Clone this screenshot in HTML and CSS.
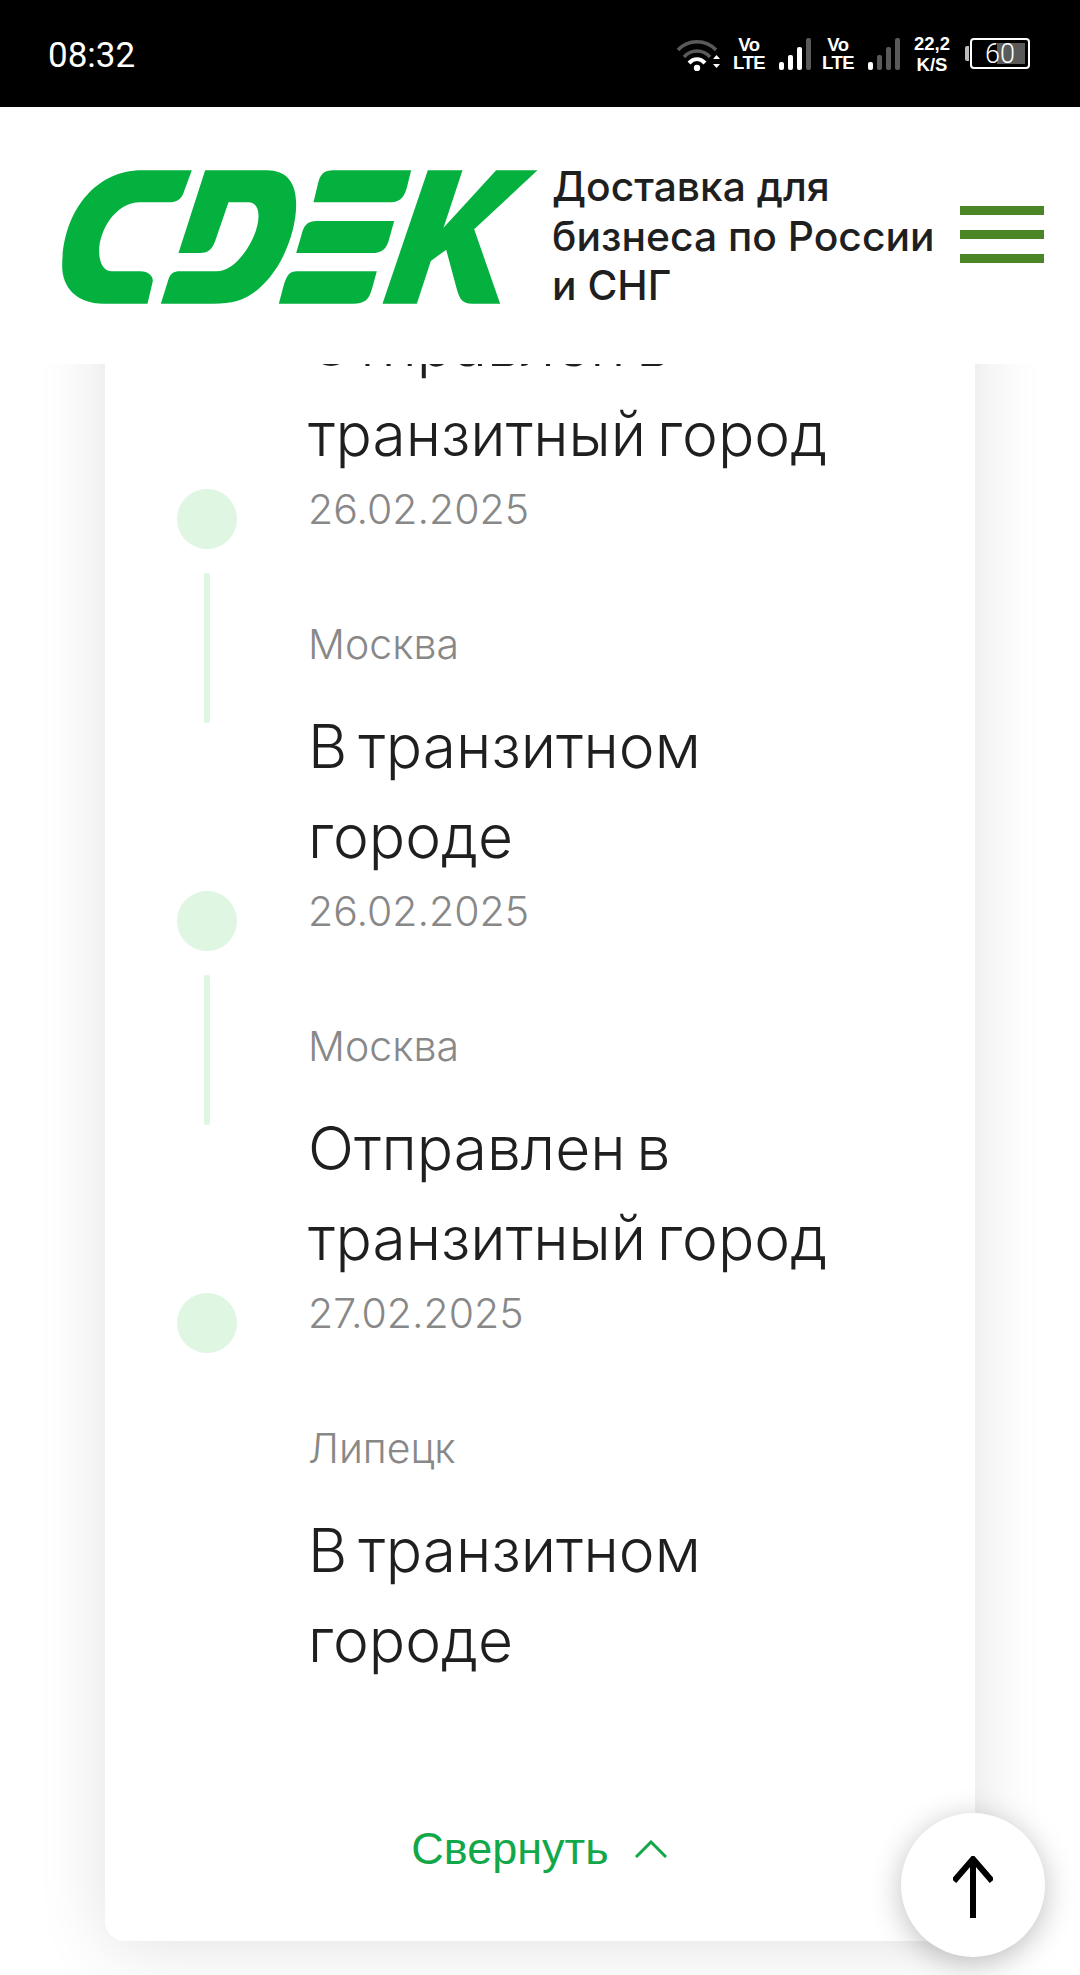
FILE: index.html
```html
<!DOCTYPE html>
<html lang="ru">
<head>
    <meta charset="UTF-8">
    <meta name="viewport" content="width=device-width, initial-scale=1.0">
    <title>СДЭК</title>
    <link rel="stylesheet" href="styles.css">
</head>
<body>
    <div class="status-bar">
        <span class="clock">08:32</span>
        <div class="status-icons">
            <svg class="wifi" viewBox="0 0 44 34" width="44" height="34">
                <path d="M2 13 C12 2 30 2 40 13" fill="none" stroke="#5a5a5a" stroke-width="3.5"/>
                <path d="M8 20 C15 12 27 12 34 20" fill="none" stroke="#5a5a5a" stroke-width="3.5"/>
                <path d="M13 26 C18 21 24 21 29 26" fill="none" stroke="#fff" stroke-width="4"/>
                <circle cx="21" cy="31" r="3.2" fill="#fff"/>
                <path d="M37 22 L40.500 18 L44 22 Z M37 27 L44 27 L40.500 31 Z" fill="#fff"/>
            </svg>
            <span class="volte">Vo<br>LTE</span>
            <svg class="signal" viewBox="0 0 32 32" width="32" height="32">
                <rect x="0" y="24" width="5" height="8" rx="2" fill="#fff"/>
                <rect x="9" y="17" width="5" height="15" rx="2" fill="#fff"/>
                <rect x="18" y="9" width="5" height="23" rx="2" fill="#fff"/>
                <rect x="27" y="0" width="5" height="32" rx="2" fill="#5a5a5a"/>
            </svg>
            <span class="volte">Vo<br>LTE</span>
            <svg class="signal" viewBox="0 0 32 32" width="32" height="32">
                <rect x="0" y="24" width="5" height="8" rx="2" fill="#fff"/>
                <rect x="9" y="17" width="5" height="15" rx="2" fill="#5a5a5a"/>
                <rect x="18" y="9" width="5" height="23" rx="2" fill="#5a5a5a"/>
                <rect x="27" y="0" width="5" height="32" rx="2" fill="#5a5a5a"/>
            </svg>
            <span class="speed">22,2<br>K/S</span>
            <div class="battery">
                <span class="battery-nub"></span>
                <div class="battery-body">
                    <span class="battery-level">60</span>
                </div>
            </div>
        </div>
    </div>

    <header class="site-header">
        <svg class="logo" viewBox="60 84 1436 408" width="479" height="136">
            <g fill="#04b13f">
                <path d="M455 88 L305 88 C160 88 66 220 66 375 C66 440 110 488 190 488 L322 488 L338 420 C338 405 325 391 300 391 L215 391 C190 391 177 365 177 330 C177 270 225 184 300 184 L385 184 C410 184 425 175 432 150 Z"/>
                <path d="M495 88 L680 88 C735 88 768 120 768 190 C768 270 730 370 670 430 C625 475 585 488 520 488 L362 488 L385 415 C391 398 400 391 420 391 L530 391 C590 391 655 290 655 225 C655 200 645 184 625 184 L565 184 L525 300 C515 328 500 336 480 336 L415 336 Z"/>
                <path d="M880 88 L1113 88 L1100 140 C1090 175 1075 184 1045 184 L820 184 L833 130 C840 100 850 88 880 88 Z"/>
                <path d="M830 240 L1062 240 L1048 290 C1040 325 1025 336 995 336 L768 336 L783 285 C790 255 800 240 830 240 Z"/>
                <path d="M770 391 L1010 391 L995 445 C985 480 970 488 940 488 L716 488 L730 435 C740 400 750 391 770 391 Z"/>
                <path d="M1163 88 L1267 88 L1210 260 L1368 88 L1492 88 L1302 265 L1380 488 L1295 488 C1270 488 1260 480 1250 445 L1218 326 L1172 360 L1130 488 L1027 488 Z"/>
            </g>
        </svg>
        <div class="tagline">Доставка для<br>бизнеса по России<br>и СНГ</div>
        <div class="burger">
            <span></span>
            <span></span>
            <span></span>
        </div>
    </header>

    <main class="content">
        <section class="track-card">
            <div class="step">
                <div class="marker"><span class="dot"></span><span class="line"></span></div>
                <div class="step-text">
                    <div class="step-date">26.02.2025</div>
                    <div class="step-city">Москва</div>
                    <div class="step-title">Отправлен в<br>транзитный город</div>
                </div>
            </div>
            <div class="step">
                <div class="marker"><span class="dot"></span><span class="line"></span></div>
                <div class="step-text">
                    <div class="step-date">26.02.2025</div>
                    <div class="step-city">Москва</div>
                    <div class="step-title">В транзитном<br>городе</div>
                </div>
            </div>
            <div class="step">
                <div class="marker"><span class="dot"></span><span class="line"></span></div>
                <div class="step-text">
                    <div class="step-date">26.02.2025</div>
                    <div class="step-city">Москва</div>
                    <div class="step-title">Отправлен в<br>транзитный город</div>
                </div>
            </div>
            <div class="step">
                <div class="marker"><span class="dot"></span></div>
                <div class="step-text">
                    <div class="step-date">27.02.2025</div>
                    <div class="step-city">Липецк</div>
                    <div class="step-title">В транзитном<br>городе</div>
                </div>
            </div>
            <div class="collapse">
                <span>Свернуть</span>
                <svg viewBox="0 0 32 18" width="32" height="18">
                    <path d="M1 17 L16 2 L31 17" fill="none" stroke="#12a84a" stroke-width="3"/>
                </svg>
            </div>
        </section>
    </main>

    <button class="to-top">
        <svg viewBox="0 0 40 62" width="40" height="62">
            <path d="M20 62 L20 3 M1 25 L20 3 L39 25" fill="none" stroke="#000" stroke-width="6"/>
        </svg>
    </button>
</body>
</html>
```

FILE: styles.css
```css
html, body {
    height: 100%;
}

body {
    margin: 0;
    height: 1975px;
    display: flex;
    flex-direction: column;
    overflow: hidden;
    position: relative;
    background-color: #ffffff;
    font-family: Inter, "Noto Sans", sans-serif;
    color: #1f1f1f;
}

/* status bar */
.status-bar {
    height: 107px;
    flex: none;
    display: flex;
    align-items: center;
    justify-content: space-between;
    padding: 0 50px 0 48px;
    background-color: #000000;
    color: #ffffff;
}

.clock {
    font-family: Roboto, sans-serif;
    font-size: 35px;
    margin-top: 3px;
}

.status-icons {
    display: flex;
    align-items: center;
}

.wifi {
    margin-right: 13px;
}

.volte {
    font-family: "Liberation Sans", sans-serif;
    font-size: 18.500px;
    font-weight: bold;
    line-height: 18px;
    letter-spacing: -0.500px;
    text-align: center;
    width: 32px;
}

.signal {
    margin: 0 11px 0 14px;
}

.speed {
    font-family: "Liberation Sans", sans-serif;
    font-size: 18.500px;
    font-weight: bold;
    line-height: 21px;
    text-align: center;
    width: 40px;
    margin-left: 1px;
}

.battery {
    display: flex;
    align-items: center;
    margin-left: 13px;
}

.battery-nub {
    width: 4px;
    height: 15px;
    border-radius: 2px 0 0 2px;
    background-color: #bbbbbb;
    margin-right: 1px;
}

.battery-body {
    width: 50px;
    height: 21px;
    padding: 3px;
    border: 2px solid #ffffff;
    border-radius: 4px;
    display: flex;
    align-items: center;
    justify-content: center;
    background: linear-gradient(to right, transparent 44%, #5a5a5a 44%) content-box;
}

.battery-level {
    font-family: Roboto, sans-serif;
    font-size: 27px;
    font-weight: 300;
}

/* header */
.site-header {
    height: 257px;
    flex: none;
    display: flex;
    align-items: flex-start;
    padding: 62px 36px 0 60px;
    box-sizing: border-box;
    background-color: #ffffff;
}

.tagline {
    margin: -7px 0 0 13px;
    font-size: 40.800px;
    font-weight: 550;
    line-height: 49.500px;
    white-space: nowrap;
}

.burger {
    margin: 37px 0 0 auto;
    display: flex;
    flex-direction: column;
    gap: 15px;
}

.burger span {
    display: block;
    width: 84px;
    height: 9px;
    background-color: #4a8526;
}

/* tracking */
.content {
    flex: 1;
    min-height: 0;
    display: flex;
    flex-direction: column;
    justify-content: flex-end;
    overflow: hidden;
    padding: 0 105px 34px;
}

.track-card {
    flex: none;
    padding: 0 0 0 72px;
    background-color: #ffffff;
    border-radius: 0 0 20px 20px;
    box-shadow: 0 4px 70px rgba(0, 0, 0, 0.12);
}

.step {
    display: grid;
    grid-template-columns: 131px 1fr;
}

.step-text {
    margin-top: -2px;
}

.marker {
    display: flex;
    flex-direction: column;
    align-items: center;
    width: 60px;
}

.dot {
    width: 60px;
    height: 60px;
    border-radius: 50%;
    background-color: #def6e2;
}

.line {
    width: 6px;
    height: 150px;
    margin-top: 24px;
    background-color: #def6e2;
    border-radius: 2px;
}

.step-date {
    font-size: 41px;
    font-weight: 300;
    line-height: 44px;
    color: #888888;
}

.step-city {
    margin-top: 91px;
    font-size: 41px;
    font-weight: 300;
    line-height: 44px;
    color: #888888;
}

.step-title {
    margin: 35px 0 10px;
    font-size: 60.500px;
    font-weight: 300;
    line-height: 90px;
    word-spacing: -6px;
    white-space: nowrap;
}

.collapse {
    display: flex;
    justify-content: center;
    gap: 26px;
    margin: 128px 0 0 -74px;
    height: 118px;
    align-items: flex-start;
    font-family: "Liberation Sans", sans-serif;
    font-size: 45px;
    color: #12a84a;
}

.collapse svg {
    margin-top: 17px;
}

.to-top {
    position: absolute;
    left: 901px;
    top: 1813px;
    width: 144px;
    height: 144px;
    padding: 4px 0 0;
    border: none;
    border-radius: 50%;
    background-color: #ffffff;
    box-shadow: 0 6px 30px rgba(0, 0, 0, 0.25);
    display: flex;
    align-items: center;
    justify-content: center;
}
```
